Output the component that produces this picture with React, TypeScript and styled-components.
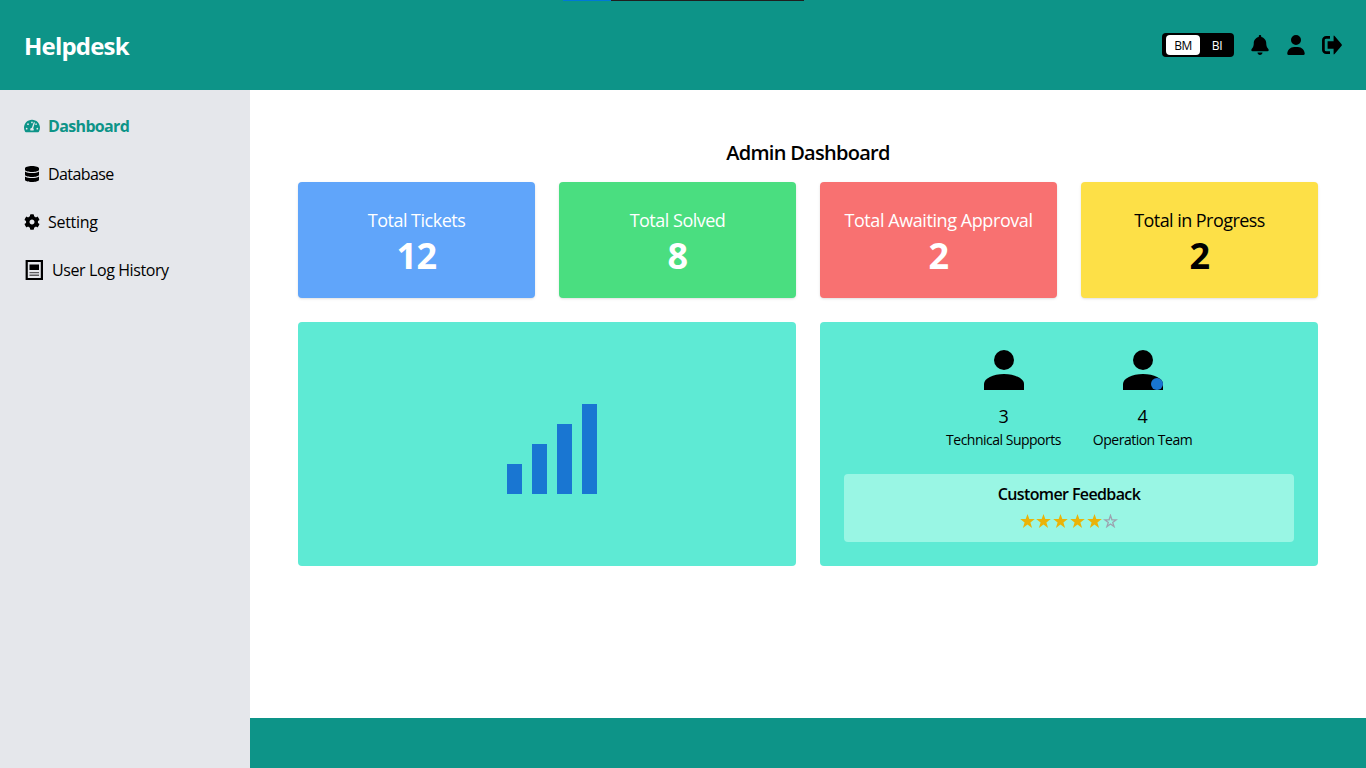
import React from 'react';
import styled, { createGlobalStyle } from 'styled-components';
import { FaTachometerAlt, FaDatabase, FaCog } from 'react-icons/fa';
import { FaBell, FaUser } from 'react-icons/fa6';

const GlobalStyle = createGlobalStyle`
  *, *::before, *::after { box-sizing: border-box; }
  body { margin: 0; background: #fff; color: #000; font-family: "Open Sans", "Noto Sans", sans-serif; font-size: 16px; line-height: 24px; }
  h1, h2, h3, p { margin: 0; }
  svg { display: block; flex: none; }
`;

const Page = styled.div`
  height: 768px;
  display: flex;
  flex-direction: column;
  overflow: hidden;
`;

const LoadStrip = styled.div`
  position: absolute;
  top: 0;
  left: 563px;
  width: 241px;
  height: 1px;
  background: linear-gradient(to right, #0078d7 48px, #1f1f1f 48px);
`;

const Header = styled.header`
  flex: none;
  height: 90px;
  padding: 0 24px;
  display: flex;
  align-items: center;
  justify-content: space-between;
  background: #0d9488;
`;

const Label = styled.span<{ $weight?: number; $spacing?: number }>`
  height: 24px;
  line-height: 25px;
  font-weight: ${p => p.$weight ?? 400};
  letter-spacing: ${p => p.$spacing ?? 0}px;
  white-space: nowrap;
`;

const Brand = styled.h1`
  padding-top: 2px;
  color: #fff;
  font-size: 24px;
  line-height: 32px;
  font-weight: 700;
  letter-spacing: -0.8px;
`;

const Tools = styled.div`
  display: flex;
  align-items: center;
  gap: 16px;
`;

const Toggle = styled.div`
  display: flex;
  height: 24px;
  width: 72px;
  padding: 2px 4px;
  border-radius: 4px;
  background: #000;
`;

const ToggleOption = styled.span<{ $active?: boolean }>`
  width: ${p => (p.$active ? 34 : 30)}px;
  height: 20px;
  border-radius: 4px;
  text-align: center;
  font-size: 12px;
  line-height: 21px;
  letter-spacing: -0.4px;
  padding-left: ${p => (p.$active ? 0 : 4)}px;
  background: ${p => (p.$active ? '#fff' : 'transparent')};
  color: ${p => (p.$active ? '#000' : '#fff')};
`;

const Body = styled.div`
  flex: 1;
  display: flex;
  min-height: 0;
`;

const Sidebar = styled.nav`
  flex: none;
  width: 250px;
  padding: 24px;
  display: flex;
  flex-direction: column;
  gap: 24px;
  background: #e5e7eb;
`;

const NavItem = styled.a<{ $active?: boolean }>`
  display: flex;
  align-items: center;
  gap: 8px;
  height: 24px;
  color: ${p => (p.$active ? '#0d9488' : '#000')};
`;

const Column = styled.div`
  flex: 1;
  display: flex;
  flex-direction: column;
`;

const Main = styled.main`
  flex: 1;
  padding: 48px;
`;

const Title = styled.h2`
  height: 28px;
  margin-bottom: 16px;
  text-align: center;
  font-size: 20px;
  line-height: 29px;
  font-weight: 600;
  letter-spacing: -0.72px;
`;

const Stats = styled.div`
  display: grid;
  grid-template-columns: repeat(4, 1fr);
  gap: 24px;
`;

const StatCard = styled.section<{ $bg: string; $fg: string }>`
  height: 116px;
  padding: 24px 0;
  display: flex;
  flex-direction: column;
  align-items: center;
  border-radius: 4px;
  background: ${p => p.$bg};
  color: ${p => p.$fg};
  box-shadow: 0 1px 3px rgba(0, 0, 0, 0.1), 0 1px 2px -1px rgba(0, 0, 0, 0.1);
`;

const StatName = styled.p<{ $spacing: number }>`
  font-size: 18px;
  line-height: 28px;
  white-space: nowrap;
  letter-spacing: ${p => p.$spacing}px;
`;

const StatValue = styled.p`
  font-size: 36px;
  line-height: 44px;
  font-weight: 700;
  letter-spacing: -0.5px;
`;

const Panels = styled.div`
  display: grid;
  grid-template-columns: 1fr 1fr;
  gap: 24px;
  margin-top: 24px;
`;

const Panel = styled.section`
  height: 244px;
  padding: 24px;
  border-radius: 4px;
  background: #5eead4;
`;

const ChartPanel = styled(Panel)`
  display: flex;
  align-items: center;
  justify-content: center;
`;

const Teams = styled.div`
  display: flex;
  justify-content: center;
  gap: 32px;
  height: 104px;
`;

const Team = styled.div<{ $width: number }>`
  width: ${p => p.$width}px;
  display: flex;
  flex-direction: column;
  align-items: center;
`;

const TeamCount = styled.p`
  margin-top: 8px;
  font-size: 18px;
  line-height: 28px;
  letter-spacing: -0.4px;
`;

const TeamName = styled.p`
  font-size: 14px;
  line-height: 20px;
  letter-spacing: -0.5px;
  white-space: nowrap;
`;

const Feedback = styled.div`
  height: 68px;
  margin-top: 24px;
  padding: 8px;
  display: flex;
  flex-direction: column;
  align-items: center;
  border-radius: 4px;
  background: #99f6e4;
`;

const Stars = styled.div`
  display: flex;
  gap: 1.8px;
  margin-top: 8px;
`;

const Footer = styled.footer`
  flex: none;
  height: 50px;
  background: #0d9488;
`;

const ExitIcon = () => (
  <svg width="20" height="20" viewBox="0 0 20 20">
    <path d="M8 2.3H4.2A2.8 2.8 0 0 0 1.4 5.1V14.9A2.8 2.8 0 0 0 4.2 17.7H8" fill="none" stroke="#000" strokeWidth="2.7" />
    <path d="M5.6 6.2H11.6V1.2Q11.6 0 12.6 1L19.6 9.2Q20.2 10 19.6 10.8L12.6 19Q11.6 20 11.6 18.8V13.8H5.6Z" />
  </svg>
);

const LogIcon = () => (
  <svg width="20" height="20" viewBox="0 0 20 20">
    <path fillRule="evenodd" d="M1.6 0H19V20H1.6ZM3.8 2V18H16.8V2Z" />
    <path d="M5.5 4.5H15V10H5.5Z" />
    <path d="M5.5 12H15V13.3H5.5ZM5.5 14.6H15V15.9H5.5Z" opacity="0.6" />
  </svg>
);

const BarsIcon = () => (
  <svg width="100" height="100" viewBox="0 0 100 100" fill="#1976d2">
    <rect x="10" y="70" width="15" height="30" />
    <rect x="35" y="50" width="15" height="50" />
    <rect x="60" y="30" width="15" height="70" />
    <rect x="85" y="10" width="15" height="90" />
  </svg>
);

const PersonIcon = ({ dot }: { dot?: boolean }) => (
  <svg width="48" height="48" viewBox="0 0 48 48">
    <circle cx="24" cy="14" r="10" />
    <path d="M4 44V38C4 32.5 13 28 24 28S44 32.5 44 38V44Z" />
    {dot && <circle cx="38" cy="38" r="6" fill="#1976d2" />}
  </svg>
);

const Star = ({ filled }: { filled: boolean }) => (
  <svg width="15" height="14" viewBox="0 0 15 14">
    <path
      d={filled ? 'M7.5 0 9.3 5.1H14.8L10.4 8.4 12.1 14 7.5 10.6 2.9 14 4.6 8.4 0.2 5.1H5.7Z' : 'M7.5 1.5 8.9 5.8H13.3L9.7 8.4 11.1 12.6 7.5 10 3.9 12.6 5.3 8.4 1.7 5.8H6.1Z'}
      fill={filled ? '#eab308' : 'none'}
      stroke={filled ? 'none' : '#9ca3af'}
      strokeWidth={1.3}
    />
  </svg>
);

const stats = [
  { name: 'Total Tickets', value: 12, bg: '#60a5fa', fg: '#fff', spacing: -0.5 },
  { name: 'Total Solved', value: 8, bg: '#4ade80', fg: '#fff', spacing: -0.5 },
  { name: 'Total Awaiting Approval', value: 2, bg: '#f87171', fg: '#fff', spacing: -0.42 },
  { name: 'Total in Progress', value: 2, bg: '#fde047', fg: '#000', spacing: -0.55 },
];

export default function App() {
  return (
    <Page>
      <GlobalStyle />
      <LoadStrip />
      <Header>
        <Brand>Helpdesk</Brand>
        <Tools>
          <Toggle>
            <ToggleOption $active>BM</ToggleOption>
            <ToggleOption>BI</ToggleOption>
          </Toggle>
          <FaBell size={20} />
          <FaUser size={20} />
          <ExitIcon />
        </Tools>
      </Header>
      <Body>
        <Sidebar>
          <NavItem $active>
            <FaTachometerAlt size={16} />
            <Label $weight={700} $spacing={-0.65}>Dashboard</Label>
          </NavItem>
          <NavItem>
            <FaDatabase size={16} />
            <Label $spacing={-0.6}>Database</Label>
          </NavItem>
          <NavItem>
            <FaCog size={16} />
            <Label $spacing={-0.3}>Setting</Label>
          </NavItem>
          <NavItem>
            <LogIcon />
            <Label $spacing={-0.4}>User Log History</Label>
          </NavItem>
        </Sidebar>
        <Column>
          <Main>
            <Title>Admin Dashboard</Title>
            <Stats>
              {stats.map(s => (
                <StatCard key={s.name} $bg={s.bg} $fg={s.fg}>
                  <StatName $spacing={s.spacing}>{s.name}</StatName>
                  <StatValue>{s.value}</StatValue>
                </StatCard>
              ))}
            </Stats>
            <Panels>
              <ChartPanel>
                <BarsIcon />
              </ChartPanel>
              <Panel>
                <Teams>
                  <Team $width={115}>
                    <PersonIcon />
                    <TeamCount>3</TeamCount>
                    <TeamName>Technical Supports</TeamName>
                  </Team>
                  <Team $width={99}>
                    <PersonIcon dot />
                    <TeamCount>4</TeamCount>
                    <TeamName>Operation Team</TeamName>
                  </Team>
                </Teams>
                <Feedback>
                  <Label $weight={600} $spacing={-0.62}>Customer Feedback</Label>
                  <Stars>
                    {[1, 2, 3, 4, 5, 6].map(n => (
                      <Star key={n} filled={n <= 5} />
                    ))}
                  </Stars>
                </Feedback>
              </Panel>
            </Panels>
          </Main>
          <Footer />
        </Column>
      </Body>
    </Page>
  );
}
